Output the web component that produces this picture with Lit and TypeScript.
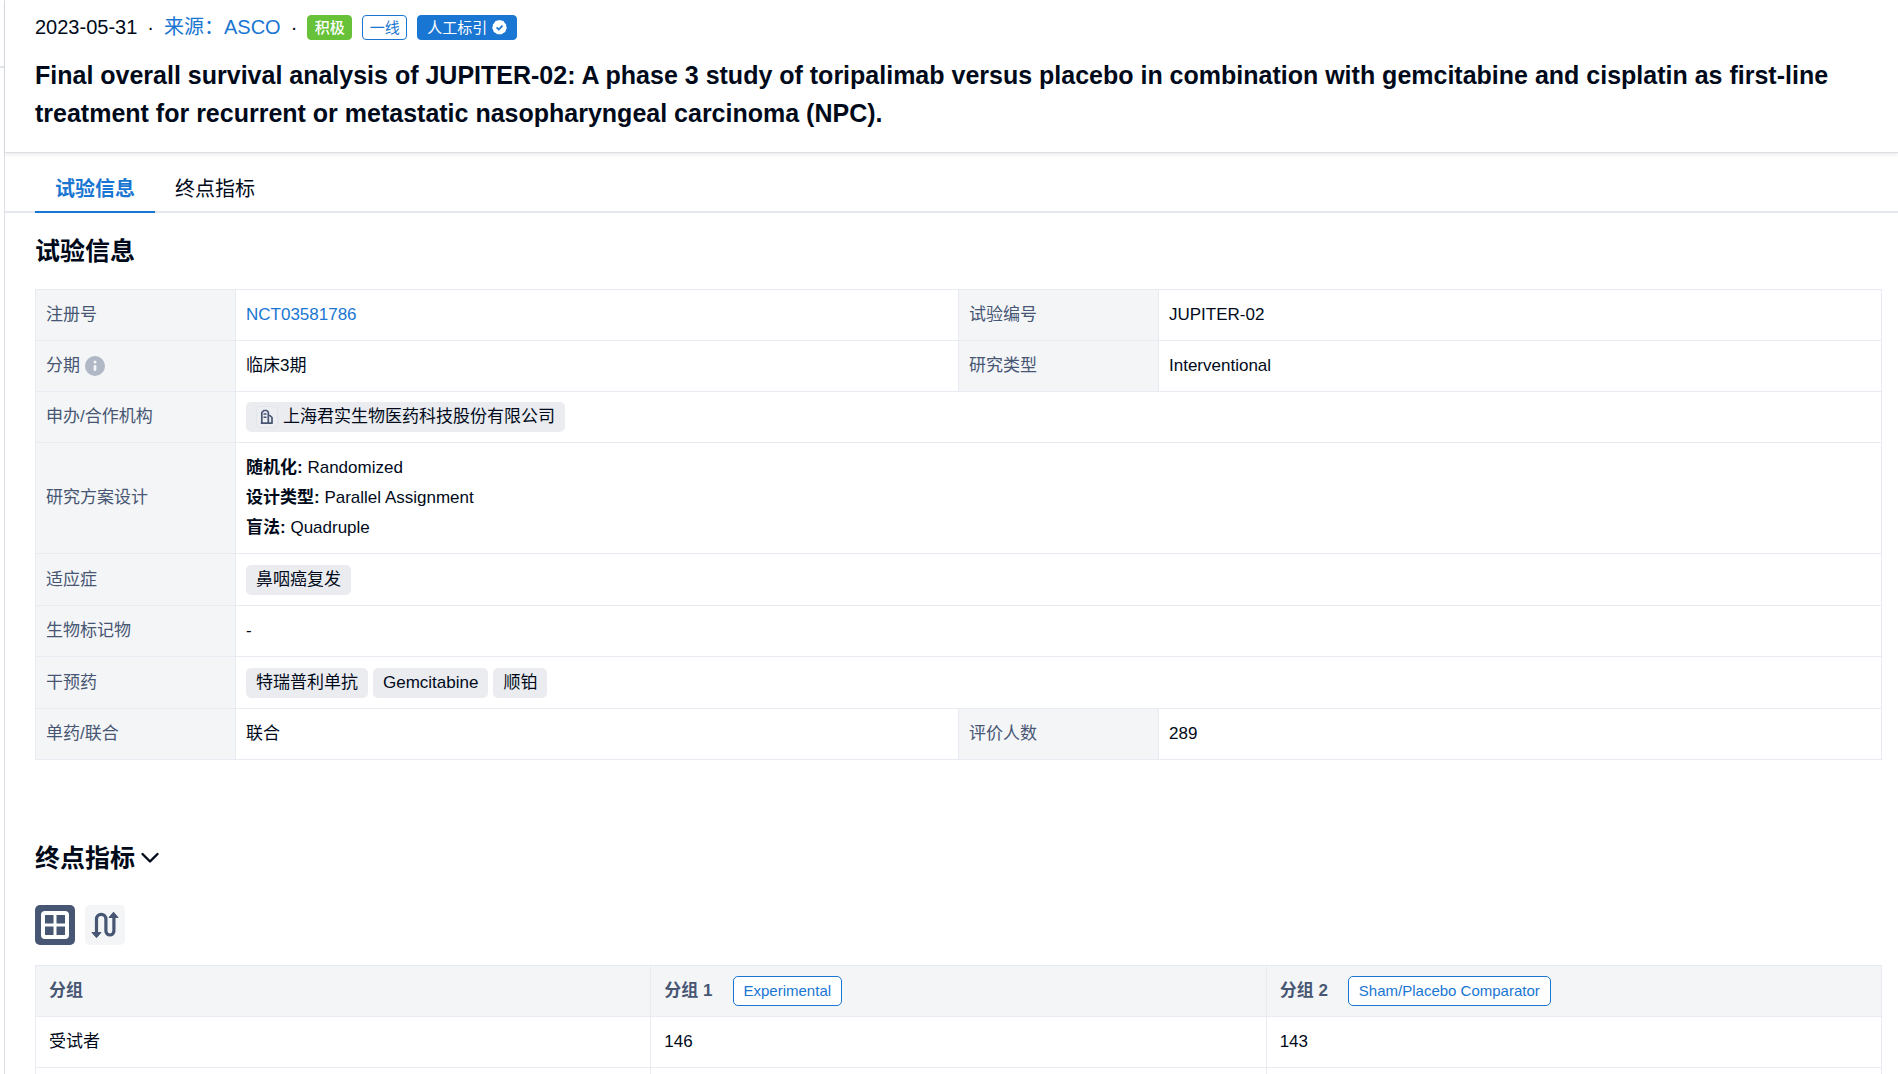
import { LitElement, html, css, svg, nothing } from "lit";
import { customElement, property, state } from "lit/decorators.js";
import { classMap } from "lit/directives/class-map.js";

const checkIcon = svg`<svg viewBox="0 0 15 15" width="15" height="15" aria-hidden="true">
  <path fill="#fff" d="M7.500 0l1.900.6 2.100.5 1.100 1.700 1.500 1.600.2 2.100.5 1.600-.9 1.900-.7 2-1.800.9-1.700 1.300-2.200.1-2.200-.1-1.700-1.300-1.800-.9-.7-2L.2 8.100l.5-1.600.2-2.100 1.500-1.600 1.100-1.700L5.600.6z"/>
  <path fill="none" stroke="#1976d2" stroke-width="1.800" d="M4.600 7.400l2.200 2.100 3.700-3.900"/>
</svg>`;

const infoIcon = svg`<svg viewBox="0 0 20 20" width="20" height="20" aria-hidden="true">
  <circle cx="10" cy="10" r="10" fill="#b0b7c5"/>
  <circle cx="10" cy="5.900" r="1.500" fill="#f3f5f8"/>
  <rect x="8.600" y="9" width="2.800" height="6" rx="1.200" fill="#f3f5f8"/>
</svg>`;

const orgIcon = svg`<svg viewBox="0 0 22 22" width="22" height="22" aria-hidden="true">
  <rect x=".5" y=".5" width="21" height="21" rx="4" fill="#edeef2" stroke="#e1e4ea"/>
  <path fill="none" stroke="#475673" stroke-width="1.700" stroke-linejoin="round" d="M5.800 17.200V6.500l2-2h2.900l1.600 1.500v11.200M12.300 9.500h1.600l2.100 2v5.700H4.800"/>
  <path fill="none" stroke="#475673" stroke-width="1.500" d="M7.500 8h3M7.500 11.200h3"/>
</svg>`;

const chevronIcon = svg`<svg viewBox="0 0 20 20" width="20" height="20" aria-hidden="true">
  <path fill="none" stroke="#000a1a" stroke-width="2.400" stroke-linecap="round" stroke-linejoin="round" d="M2.500 6l7.500 7.500L17.500 6"/>
</svg>`;

const gridIcon = svg`<svg viewBox="0 0 40 40" width="40" height="40" aria-hidden="true">
  <rect x="6" y="6" width="28" height="28" rx="4" fill="#fff"/>
  <path fill="#475673" d="M10 10h8.500v8.500H10zM21.500 10H30v8.500h-8.500zM10 21.500h8.500V30H10zM21.500 21.500H30V30h-8.500z"/>
</svg>`;

const flowIcon = svg`<svg viewBox="0 0 40 40" width="40" height="40" aria-hidden="true">
  <path fill="none" stroke="#475673" stroke-width="3.200" d="M11.500 28V14a4.700 4.700 0 0 1 9.400 0v12a4 4 0 0 0 8 0V12"/>
  <path fill="#475673" stroke="#475673" stroke-linejoin="round" d="M7 27.500h9l-4.500 5.200zM24 12.500h9l-4.500-5.300z"/>
</svg>`;

const fontStack = css`"Liberation Sans", "Noto Sans CJK SC", sans-serif`;

interface Field {
  label: string;
  hint?: boolean;
  kind?: "link" | "org" | "chips" | "design";
  values: string[];
}

const rows: Field[][] = [
  [
    { label: "注册号", kind: "link", values: ["NCT03581786"] },
    { label: "试验编号", values: ["JUPITER-02"] },
  ],
  [
    { label: "分期", hint: true, values: ["临床3期"] },
    { label: "研究类型", values: ["Interventional"] },
  ],
  [{ label: "申办/合作机构", kind: "org", values: ["上海君实生物医药科技股份有限公司"] }],
  [
    {
      label: "研究方案设计",
      kind: "design",
      values: ["随机化:|Randomized", "设计类型:|Parallel Assignment", "盲法:|Quadruple"],
    },
  ],
  [{ label: "适应症", kind: "chips", values: ["鼻咽癌复发"] }],
  [{ label: "生物标记物", values: ["-"] }],
  [{ label: "干预药", kind: "chips", values: ["特瑞普利单抗", "Gemcitabine", "顺铂"] }],
  [
    { label: "单药/联合", values: ["联合"] },
    { label: "评价人数", values: ["289"] },
  ],
];

const groups = [
  { name: "分组 1", role: "Experimental", subjects: "146" },
  { name: "分组 2", role: "Sham/Placebo Comparator", subjects: "143" },
];

@customElement("trial-info-table")
class TrialInfoTable extends LitElement {
  @property({ attribute: false }) rows: Field[][] = [];

  static styles = css`
    :host { display: block; }
    table {
      width: 100%;
      table-layout: fixed;
      border-collapse: collapse;
      font: 400 17px/30px ${fontStack};
      color: #000a1a;
    }
    .label-col { width: 200px; }
    th, td {
      border: 1px solid #e9ebf3;
      padding: 10px;
      text-align: left;
      font-weight: 400;
    }
    th { background: #f3f5f7; color: #475673; }
    .label, .chips { display: flex; align-items: center; }
    .label { gap: 5px; }
    .chips { gap: 5px; }
    .list { min-height: 31px; }
    .chip {
      display: inline-flex;
      align-items: center;
      gap: 5px;
      height: 30px;
      padding: 0 10px;
      border-radius: 5px;
      background: #ebecf0;
      color: inherit;
      text-decoration: none;
    }
    .link { color: #1976d2; text-decoration: none; }
    svg { display: block; }
  `;

  private renderValue(f: Field) {
    switch (f.kind) {
      case "link":
        return html`<a class="link" href="#">${f.values[0]}</a>`;
      case "org":
      case "chips":
        return html`<div class=${classMap({ chips: true, list: f.kind === "chips" })}>
          ${f.values.map(
            (v) => html`<a class="chip" href="#">${f.kind === "org" ? orgIcon : nothing}<span>${v}</span></a>`
          )}
        </div>`;
      case "design":
        return f.values.map((v) => {
          const [name, value] = v.split("|");
          return html`<div><b>${name}</b> ${value}</div>`;
        });
      default:
        return f.values[0];
    }
  }

  render() {
    return html`<table>
      <colgroup><col class="label-col" /><col /><col class="label-col" /><col /></colgroup>
      <tbody>
        ${this.rows.map(
          (r) => html`<tr>
            ${r.map(
              (f) => html`<th scope="row"><div class="label">${f.label}${f.hint ? infoIcon : nothing}</div></th>
                <td colspan=${r.length === 1 ? 3 : 1}>${this.renderValue(f)}</td>`
            )}
          </tr>`
        )}
      </tbody>
    </table>`;
  }
}

@customElement("endpoint-table")
class EndpointTable extends LitElement {
  static styles = css`
    :host { display: block; }
    table {
      width: 100%;
      table-layout: fixed;
      border-collapse: collapse;
      font: 400 17px/30px ${fontStack};
      color: #000a1a;
    }
    th, td {
      border: 1px solid #e9ebf3;
      padding: 10px 13px;
      height: 30px;
      text-align: left;
    }
    th { background: #f3f5f7; color: #475673; font-weight: 700; }
    .group { display: flex; align-items: center; gap: 20px; }
    .role {
      box-sizing: border-box;
      height: 30px;
      padding: 0 10px;
      border: 1px solid #1976d2;
      border-radius: 5px;
      background: #fff;
      color: #1976d2;
      font-size: 15px;
      line-height: 28px;
      font-weight: 400;
    }
  `;

  render() {
    return html`<table>
      <thead>
        <tr>
          <th scope="col">分组</th>
          ${groups.map(
            (g) => html`<th scope="col"><div class="group">${g.name}<span class="role">${g.role}</span></div></th>`
          )}
        </tr>
      </thead>
      <tbody>
        <tr><td>受试者</td>${groups.map((g) => html`<td>${g.subjects}</td>`)}</tr>
        <tr><td></td>${groups.map(() => html`<td></td>`)}</tr>
      </tbody>
    </table>`;
  }
}

@customElement("app-root")
class AppRoot extends LitElement {
  @state() private tab = 0;
  @state() private view = 0;

  static styles = css`
    :host {
      display: flex;
      height: 100vh;
      overflow: hidden;
      background: #fff;
      color: #000a1a;
      font-family: ${fontStack};
    }
    .edge {
      flex: none;
      width: 4px;
      border-right: 1px solid #dcdfe6;
    }
    .edge::before {
      content: "";
      display: block;
      margin-top: 66px;
      height: 2px;
      background: #e1e4e9;
    }
    .page { flex: 1; min-width: 0; }
    .head {
      padding: 15px 30px 20px;
      border-bottom: 1px solid #dcdee4;
      box-shadow: 0 2px 3px rgba(0, 10, 26, 0.08);
    }
    .meta {
      display: flex;
      align-items: center;
      gap: 10px;
      height: 25px;
      font-size: 20px;
      line-height: 25px;
    }
    .source { color: #1976d2; text-decoration: none; }
    .badge {
      box-sizing: border-box;
      display: flex;
      align-items: center;
      justify-content: center;
      gap: 5px;
      min-width: 45px;
      height: 25px;
      padding: 0 6px;
      border: 1px solid #1976d2;
      border-radius: 4px;
      color: #1976d2;
      font-size: 15px;
      line-height: 23px;
    }
    .positive { background: #67c23a; border-color: #67c23a; color: #fff; font-weight: 500; }
    .curated { background: #1976d2; color: #fff; padding: 0 9px; }
    h1 {
      margin: 16px 0 0;
      font-size: 25px;
      line-height: 38px;
      font-weight: 700;
    }
    .tabs {
      display: flex;
      padding: 0 30px;
      border-bottom: 2px solid #e4e7ed;
    }
    .tab {
      margin: 0 0 -2px;
      padding: 21px 20px 7px;
      border: 0;
      border-bottom: 2px solid transparent;
      background: none;
      color: inherit;
      font: 400 20px/30px ${fontStack};
      cursor: pointer;
    }
    .tab.active { color: #1976d2; font-weight: 700; border-color: #1976d2; }
    .body { padding: 19px 16px 0 30px; }
    h2 {
      display: flex;
      align-items: center;
      gap: 5px;
      margin: 0 0 19px;
      font-size: 25px;
      line-height: 38px;
      font-weight: 700;
    }
    .endpoints { margin-top: 79px; }
    .fold {
      padding: 0;
      border: 0;
      background: none;
      cursor: pointer;
    }
    .views { display: flex; gap: 10px; margin: 28px 0 20px; }
    .view {
      padding: 0;
      border: 0;
      border-radius: 5px;
      background: #f3f5f7;
      cursor: pointer;
    }
    .view.active { background: #475673; }
    svg { display: block; }
  `;

  render() {
    const tabs = ["试验信息", "终点指标"];
    const views = [
      { label: "表格", icon: gridIcon },
      { label: "流程", icon: flowIcon },
    ];
    return html`
      <div class="edge"></div>
      <main class="page">
        <header class="head">
          <div class="meta">
            <time datetime="2023-05-31">2023-05-31</time>
            <span>·</span>
            <a class="source" href="#">来源：ASCO</a>
            <span>·</span>
            <span class="badge positive">积极</span>
            <span class="badge">一线</span>
            <span class="badge curated">人工标引${checkIcon}</span>
          </div>
          <h1>
            Final overall survival analysis of JUPITER-02: A phase 3 study of toripalimab versus placebo in
            combination with gemcitabine and cisplatin as first-line treatment for recurrent or metastatic
            nasopharyngeal carcinoma (NPC).
          </h1>
        </header>
        <nav class="tabs">
          ${tabs.map(
            (t, i) => html`<button
              class=${classMap({ tab: true, active: this.tab === i })}
              @click=${() => (this.tab = i)}
            >${t}</button>`
          )}
        </nav>
        <div class="body">
          <section>
            <h2>试验信息</h2>
            <trial-info-table .rows=${rows}></trial-info-table>
          </section>
          <section class="endpoints">
            <h2>终点指标<button class="fold" aria-label="收起">${chevronIcon}</button></h2>
            <div class="views">
              ${views.map(
                (v, i) => html`<button
                  class=${classMap({ view: true, active: this.view === i })}
                  aria-label=${v.label}
                  @click=${() => (this.view = i)}
                >${v.icon}</button>`
              )}
            </div>
            <endpoint-table></endpoint-table>
          </section>
        </div>
      </main>
    `;
  }
}
